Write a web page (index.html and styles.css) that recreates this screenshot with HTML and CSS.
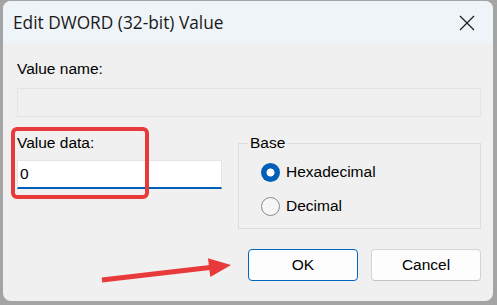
FILE: index.html
```html
<!DOCTYPE html>
<html lang="en">
<head>
  <meta charset="UTF-8" />
  <title>Edit DWORD (32-bit) Value</title>
  <link rel="stylesheet" href="styles.css">
</head>
<body>
  <div class="window">
    <div class="titlebar">
      <span class="title">Edit DWORD (32-bit) Value</span>
      <svg class="close" width="16" height="16" viewBox="0 0 16 16">
        <path d="M1 1 L15 15 M15 1 L1 15" stroke="#1b1b1b" stroke-width="1.2" fill="none"/>
      </svg>
    </div>

    <div class="content">
      <div class="label">Value name:</div>
      <div class="input disabled"></div>

      <div class="row">
        <div class="data">
          <div class="label">Value data:</div>
          <div class="input edit">0</div>
        </div>
        <fieldset class="group">
          <legend>Base</legend>
          <label class="radio"><span class="dot checked"></span>Hexadecimal</label>
          <label class="radio"><span class="dot"></span>Decimal</label>
        </fieldset>
      </div>

      <div class="buttons">
        <button class="btn default">OK</button>
        <button class="btn">Cancel</button>
      </div>
    </div>

    <!-- annotations drawn over the dialog -->
    <div class="mark"></div>
    <svg class="arrow" width="490" height="300" viewBox="3 1 490 300">
      <line x1="102" y1="280" x2="212" y2="267.3" stroke="#e83a3a" stroke-width="5"/>
      <polygon points="231,265 208,258.2 210.3,277" fill="#e83a3a"/>
    </svg>
  </div>
</body>
</html>
```

FILE: styles.css
```css
html, body { margin: 0; height: 305px; overflow: hidden; }
body { background: #a4a4a4; padding: 1px 4px 4px 3px; box-sizing: border-box; font-family: "Liberation Sans", Arial, sans-serif; font-size: 15.5px; color: #000; }
.window { position: relative; height: 300px; background: #f0f0f0; border-radius: 8px; overflow: hidden; }
.titlebar { height: 43px; background: #eff4f9; display: flex; align-items: center; justify-content: space-between; padding: 0 18px 0 10px; }
.title { font-family: "Open Sans", sans-serif; font-size: 17.3px; color: #1a1a1a; }
.close { display: block; }
.content { padding: 16px 12px 0 14px; }
.label { line-height: 18px; }
.input { height: 29px; box-sizing: border-box; margin-top: 10px; }
.input.disabled { border: 1px solid #e4e4e4; background: #f0f0f0; }
.row { display: grid; grid-template-columns: 205px 1fr; column-gap: 16px; margin-top: 17px; }
.data .input { margin-top: 8px; }
.input.edit { background: #fff; border: 1px solid #e5e5e5; border-bottom: 2px solid #005fb8; padding: 3px 0 0 2px; line-height: 20px; }
.group { margin: 0; padding: 3px 10px 5px 22px; border: 1px solid #dcdcdc; }
.group legend { padding: 0 2px; margin-left: -13px; line-height: 18px; }
.radio { display: flex; align-items: center; height: 34px; gap: 6px; }
.dot { width: 19px; height: 19px; box-sizing: border-box; border-radius: 50%; border: 1px solid #8a8a8a; background: #f6f6f6; }
.dot.checked { border: none; background: radial-gradient(circle, #fff 0 3.6px, #005fb8 4.4px); }
.buttons { display: flex; justify-content: flex-end; gap: 13px; margin-top: 20px; }
.btn { width: 110px; height: 32px; font: inherit; background: #fdfdfd; border: 1px solid #d4d4d4; border-bottom-color: #c4c4c4; border-radius: 4px; color: #000; }
.btn.default { border: 1px solid #0067c0; }
.mark { position: absolute; left: 8px; top: 126px; width: 138px; height: 72px; box-sizing: border-box; border: 4px solid #e83a3a; border-radius: 6px; }
.arrow { position: absolute; left: 0; top: 0; }
```
